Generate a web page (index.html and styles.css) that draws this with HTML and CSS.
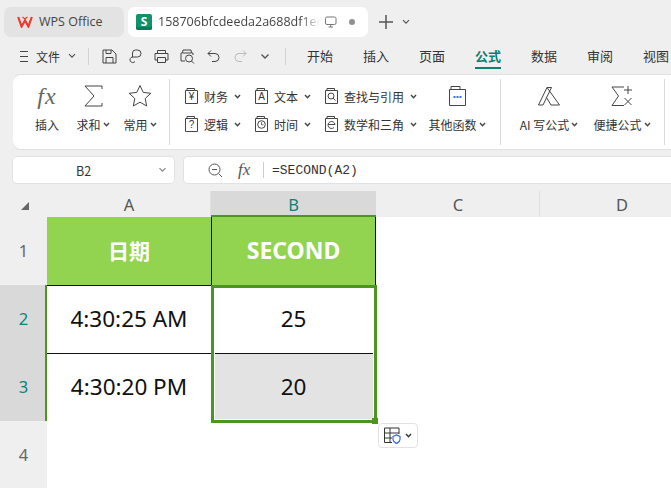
FILE: index.html
```html
<!DOCTYPE html>
<html lang="zh">
<head>
<meta charset="utf-8">
<title>WPS Office</title>
<link rel="stylesheet" href="styles.css">
</head>
<body>
<svg class="defs" xmlns="http://www.w3.org/2000/svg">
  <symbol id="chev" viewBox="0 0 8 6"><path d="M1 1.2 4 4.2 7 1.2" fill="none" stroke="currentColor" stroke-width="1.2"/></symbol>
  <symbol id="chevb" viewBox="0 0 8 6"><path d="M1 1.2 4 4.400 7 1.200" fill="none" stroke="currentColor" stroke-width="1.700"/></symbol>
  <symbol id="doc" viewBox="0 0 13 16"><path d="M.5 15.500V2.500H2V.5H9.500V2.500H12.500V15.500Z" fill="none" stroke="#444" stroke-width="1"/><path d="M2 2.500H9.500" stroke="#444" stroke-width="1"/></symbol>
</svg>

<div class="app">
  <header class="tabbar">
    <div class="tab tab-home">
      <svg class="wps-logo" viewBox="0 0 16 12"><path d="M1.200 1 4.600 10.500 8 4.500 11.400 10.500 14.800 1" fill="none" stroke="#ee3a2c" stroke-width="2.200"/><path d="M5.500 1 8 3 10.500 1" fill="none" stroke="#ee3a2c" stroke-width="1.300"/></svg>
      <span>WPS Office</span>
    </div>
    <div class="tab tab-doc">
      <span class="sheet-logo">S</span>
      <span class="tab-name">158706bfcdeeda2a688df1ec</span>
      <svg class="tab-monitor" viewBox="0 0 12 12"><rect x=".5" y="1" width="10.500" height="7.500" rx="1.500" fill="none" stroke="#777"/><path d="M3.500 11H8M5.700 8.500V11" stroke="#777"/></svg>
      <span class="tab-dot"></span>
    </div>
    <svg class="plus" viewBox="0 0 14 14"><path d="M7 0V14M0 7H14" stroke="#555" stroke-width="1.500"/></svg>
    <svg class="chev-tab"><use href="#chev"/></svg>
  </header>

  <nav class="menubar">
    <div class="quick">
      <svg class="q-menu" viewBox="0 0 8 11"><path d="M0 .5H8M0 5.500H8M0 10.500H8" stroke="#444"/></svg>
      <span class="file-label">文件</span>
      <svg class="chev-file"><use href="#chev"/></svg>
      <i class="vsep vsep-a"></i>
      <svg class="q-icon q-save" viewBox="0 0 15 15"><path d="M1 14V1H10L14 5V14ZM4 1V4.500H9V1M4 14V8.500H11V14" fill="none" stroke="#444"/></svg>
      <svg class="q-icon q-brush" viewBox="0 0 13 15"><path d="M3.500 8.500V4A3 3 0 0 1 6.500 1H8.500A3.500 3.500 0 0 1 8.500 8H3.500A2.800 2.800 0 1 0 6 12.500" fill="none" stroke="#444"/></svg>
      <svg class="q-icon q-print" viewBox="0 0 15 14"><path d="M3.500 4V1H11.500V4M3.500 10.500H1V4H14V10.500H11.500M3.500 8H11.500V13H3.500Z" fill="none" stroke="#444"/></svg>
      <svg class="q-icon q-preview" viewBox="0 0 15 15"><path d="M5 12H1V4H2.500L3 1H11L11.500 4H13V6M3 4H11" fill="none" stroke="#444"/><circle cx="9" cy="9.500" r="3.500" fill="none" stroke="#444"/><path d="M11.500 12 14 14.500" stroke="#444"/></svg>
      <svg class="q-icon q-undo" viewBox="0 0 13 14"><path d="M4 1 1 4 4 7M1 4H8A4 4 0 0 1 8 12H5" fill="none" stroke="#444"/></svg>
      <svg class="q-icon q-redo" viewBox="0 0 13 14"><path d="M9 1 12 4 9 7M12 4H5A4 4 0 0 0 5 12H8" fill="none" stroke="#bbb"/></svg>
      <svg class="chev-quick"><use href="#chev"/></svg>
      <i class="vsep vsep-b"></i>
    </div>
    <ul class="menu-tabs">
      <li>开始</li><li>插入</li><li>页面</li><li class="on">公式</li><li>数据</li><li>审阅</li><li>视图</li>
    </ul>
  </nav>

  <section class="ribbon">
    <div class="group group-main">
      <div class="big big-fx">
        <span class="fx-glyph">fx</span>
        <span class="big-label">插入</span>
      </div>
      <div class="big big-sum">
        <svg class="big-icon" viewBox="0 0 24 24"><path d="M21 5V2H4L13 12 4 22H21V19" fill="none" stroke="#444"/></svg>
        <span class="big-label">求和<svg class="chev-s"><use href="#chevb"/></svg></span>
      </div>
      <div class="big big-star">
        <svg class="big-icon" viewBox="0 0 24 24"><path d="M12 1.500 15.200 8.400 22.800 9.300 17.200 14.500 18.700 22 12 18.200 5.300 22 6.800 14.500 1.200 9.300 8.800 8.400Z" fill="none" stroke="#444"/></svg>
        <span class="big-label">常用<svg class="chev-s"><use href="#chevb"/></svg></span>
      </div>
    </div>

    <div class="group group-funcs">
      <div class="func-grid">
        <div class="fn fn-1"><span class="doc-icon"><svg><use href="#doc"/></svg><b>¥</b></span>财务<svg class="chev-s"><use href="#chevb"/></svg></div>
        <div class="fn fn-2"><span class="doc-icon"><svg><use href="#doc"/></svg><b>A</b></span>文本<svg class="chev-s"><use href="#chevb"/></svg></div>
        <div class="fn fn-3"><span class="doc-icon"><svg><use href="#doc"/></svg><svg class="doc-mark" viewBox="0 0 9 9"><circle cx="4" cy="4" r="3" fill="none" stroke="#444"/><path d="M6 6 8.500 8.500" stroke="#444"/></svg></span>查找与引用<svg class="chev-s"><use href="#chevb"/></svg></div>
        <div class="fn fn-1"><span class="doc-icon"><svg><use href="#doc"/></svg><b>?</b></span>逻辑<svg class="chev-s"><use href="#chevb"/></svg></div>
        <div class="fn fn-2"><span class="doc-icon"><svg><use href="#doc"/></svg><svg class="doc-mark" viewBox="0 0 9 9"><circle cx="4.500" cy="4.500" r="3.800" fill="none" stroke="#444"/><path d="M4.500 2.200V4.800H6.500" fill="none" stroke="#444" stroke-width=".8"/></svg></span>时间<svg class="chev-s"><use href="#chevb"/></svg></div>
        <div class="fn fn-3"><span class="doc-icon"><svg><use href="#doc"/></svg><svg class="doc-mark" viewBox="0 0 9 9"><path d="M1 4.500H8A3.500 3.500 0 1 0 7 7.500" fill="none" stroke="#444"/></svg></span>数学和三角<svg class="chev-s"><use href="#chevb"/></svg></div>
      </div>
      <div class="big big-more">
        <svg class="more-icon" viewBox="0 0 17 20"><path d="M.5 19.500V3.500H2V.5H11V3.500H16.500V19.500ZM2 3.500H11" fill="none" stroke="#444"/><path d="M4.500 11H6.500M7.500 11H9.500M10.500 11H12.500" stroke="#3f6fe8" stroke-width="2"/></svg>
        <span class="big-label">其他函数<svg class="chev-s"><use href="#chevb"/></svg></span>
      </div>
    </div>

    <div class="group group-ai">
      <div class="big big-ai">
        <svg class="big-icon" viewBox="0 0 24 24"><path d="M1.500 21 10 3.500H14.500L6 21ZM10 3.500 22.500 21H14L9.500 13.500" fill="none" stroke="#444"/></svg>
        <span class="big-label">AI 写公式<svg class="chev-s"><use href="#chevb"/></svg></span>
      </div>
      <div class="big big-quick">
        <svg class="big-icon" viewBox="0 0 24 24"><path d="M14 3H2L8.500 12 2 21.500H14" fill="none" stroke="#444"/><path d="M18 2V10M14 6H22M14.500 14 21.500 21M21.500 14 14.500 21" stroke="#444"/></svg>
        <span class="big-label">便捷公式<svg class="chev-s"><use href="#chevb"/></svg></span>
      </div>
    </div>
  </section>

  <section class="formula-row">
    <div class="namebox">
      <span>B2</span>
      <svg class="chev-name"><use href="#chev"/></svg>
    </div>
    <div class="formula">
      <svg class="zoom-icon" viewBox="0 0 15 15"><circle cx="6.500" cy="6.500" r="5.500" fill="none" stroke="#555"/><path d="M4 6.500H9M10.500 10.500 14 14" stroke="#555"/></svg>
      <span class="fx-small">fx</span>
      <i class="formula-sep"></i>
      <span class="formula-text">=SECOND(A2)</span>
    </div>
  </section>

  <main class="sheet">
    <div class="corner"><i></i></div>
    <div class="col">A</div>
    <div class="col col-on">B</div>
    <div class="col col-c">C</div>
    <div class="col">D</div>

    <div class="row">1</div>
    <div class="cell head">日期</div>
    <div class="cell head head-latin col-b">SECOND</div>
    <div class="blank"></div>

    <div class="row row-on">2</div>
    <div class="cell data">4:30:25 AM</div>
    <div class="cell data col-b">25</div>
    <div class="blank"></div>

    <div class="row row-on">3</div>
    <div class="cell data data-last">4:30:20 PM</div>
    <div class="cell data data-last data-grey col-b">20</div>
    <div class="blank"></div>

    <div class="row">4</div>
    <div class="blank blank-last"></div>

    <div class="selection"><i class="handle"></i></div>
    <div class="smart">
      <svg class="smart-icon" viewBox="0 0 17 17"><path d="M.5 1H15V7M.5 1V15.500H8M.5 6H15M.5 11H8M6 1V15.500" fill="none" stroke="#333"/><path d="M9 9.500 12.500 8 16 9.500V12.500C16 14.500 14 15.500 12.500 16.500 11 15.500 9 14.500 9 12.500Z" fill="#fff" stroke="#2f6be8" stroke-width="1.200"/></svg>
      <svg class="chev-smart"><use href="#chevb"/></svg>
    </div>
  </main>
</div>
</body>
</html>
```
FILE: styles.css
```css
* { box-sizing: border-box; }
html, body { margin: 0; padding: 0; }
body {
  width: 671px;
  height: 488px;
  overflow: hidden;
  background: #efefef;
  color: #333;
  font-family: "Noto Sans CJK SC", "Noto Sans", sans-serif;
  font-size: 12px;
}
.defs { display: none; }
.app { width: 671px; height: 488px; overflow: hidden; }
svg { display: block; flex: none; color: #555; }
i { display: block; font-style: normal; }

/* tab bar */
.tabbar { display: flex; align-items: center; height: 37px; padding: 6px 0 0 4px; }
.tab { display: flex; align-items: center; height: 30px; border-radius: 7px; }
.tab-home { width: 120px; background: #e3e3e3; padding-left: 13px; font: 12.500px "Open Sans", sans-serif; color: #444; }
.wps-logo { width: 16px; height: 12px; margin-right: 6px; }
.tab-doc { width: 240px; margin-left: 4px; background: #fff; padding-left: 8px; }
.sheet-logo {
  width: 16px; height: 16px; margin-right: 6px; border-radius: 2px;
  background: #12926b; color: #fff;
  font: bold 12px/15px "Open Sans", sans-serif; text-align: center;
  box-shadow: inset 0 -3px 0 #0b7a59;
}
.tab-name {
  width: 162px; overflow: hidden; white-space: nowrap;
  font: 12.500px "Open Sans", sans-serif; color: #444;
  -webkit-mask-image: linear-gradient(90deg, #000 88%, transparent);
  mask-image: linear-gradient(90deg, #000 88%, transparent);
}
.tab-monitor { width: 12px; height: 12px; margin-left: 5px; }
.tab-dot { width: 6px; height: 6px; margin-left: 12px; border-radius: 50%; background: #8f8f8f; }
.plus { width: 14px; height: 14px; margin-left: 11px; }
.chev-tab { width: 8px; height: 6px; margin-left: 9px; }

/* menu bar */
.menubar { display: flex; align-items: flex-start; height: 38px; }
.quick { display: flex; align-items: center; height: 38px; padding-left: 20px; }
.q-menu { width: 8px; height: 11px; }
.file-label { margin-left: 8px; width: 25px; font-size: 12px; color: #333; }
.chev-file { width: 8px; height: 6px; margin-left: 7px; }
.vsep { width: 1px; height: 17px; background: #d3d3d3; }
.vsep-a { margin-left: 12px; }
.q-icon { height: 15px; }
.q-save { width: 15px; margin-left: 13px; }
.q-brush { width: 13px; margin-left: 12px; }
.q-print { width: 15px; margin-left: 12px; }
.q-preview { width: 15px; margin-left: 11px; }
.q-undo { width: 13px; margin-left: 12px; }
.q-redo { width: 13px; margin-left: 14px; }
.chev-quick { width: 10px; height: 7px; margin-left: 13px; }
.vsep-b { margin-left: 15px; }
.menu-tabs { display: flex; gap: 30px; margin: 0 0 0 21px; padding: 0; list-style: none; font-size: 13px; color: #333; }
.menu-tabs li { height: 32px; padding-top: 10px; line-height: 18px; white-space: nowrap; }
.menu-tabs .on { color: #0c7f71; font-weight: 700; border-bottom: 2px solid #0c7f71; }

/* ribbon */
.ribbon {
  display: flex; align-items: center;
  height: 74px; margin-left: 13px; padding: 4px 0;
  background: #fff;
  border-radius: 8px 0 0 8px;
  box-shadow: 0 -1px 0 #e0e0e0, 0 1px 0 #e0e0e0;
}
.group { display: flex; height: 66px; border-right: 1px solid #d9d9d9; }
.group-main { width: 157px; padding-left: 12px; }
.group-funcs { width: 331px; padding-left: 15px; }
.group-ai { width: 164px; padding-left: 16px; }
.big { display: flex; flex-direction: column; align-items: center; padding-top: 5px; }
.big-icon { width: 24px; height: 24px; }
.big-label { display: flex; align-items: center; margin-top: 7px; height: 18px; font-size: 12px; color: #333; white-space: nowrap; }
.chev-s { width: 7px; height: 5px; margin-left: 2px; color: #444; }
.fx-glyph { height: 24px; font: italic 24px/24px "Liberation Serif", serif; color: #666; letter-spacing: 1px; }
.big-fx { width: 44px; }
.big-sum { width: 46px; margin-left: 1px; }
.big-star { width: 46px; margin-left: 1px; }
.func-grid { display: grid; grid-template-columns: 70px 70px 100px; grid-auto-rows: 28px; padding-top: 3px; }
.fn { display: flex; align-items: center; color: #333; white-space: nowrap; font-size: 12px; }
.doc-icon { position: relative; width: 13px; height: 16px; margin-right: 6px; }
.doc-icon svg { width: 13px; height: 16px; }
.doc-icon b { position: absolute; left: 0; right: 0; top: 2px; text-align: center; font: 10px/14px "Liberation Sans", sans-serif; color: #333; }
.doc-icon .doc-mark { position: absolute; left: 2px; top: 4px; width: 9px; height: 9px; }
.fn .chev-s { margin-left: 6px; }
.big-more { width: 66px; margin-left: -1px; padding-top: 7px; }
.more-icon { width: 17px; height: 20px; margin-bottom: 2px; }
.big-ai { width: 64px; }
.big-quick { width: 68px; margin-left: 7px; }

/* formula row */
.formula-row { display: flex; gap: 10px; height: 26px; margin: 8px 0 8px 13px; }
.namebox, .formula { display: flex; align-items: center; height: 26px; background: #fff; box-shadow: 0 0 0 1px #e2e2e2; border-radius: 4px; }
.namebox { position: relative; justify-content: center; width: 161px; padding-right: 20px; font-size: 12.500px; color: #333; }
.chev-name { position: absolute; right: 7px; top: 10px; width: 9px; height: 6px; color: #888; }
.formula { flex: 1; border-radius: 4px 0 0 4px; padding-left: 24px; }
.zoom-icon { width: 15px; height: 15px; }
.fx-small { width: 18px; margin-left: 15px; font: italic 17px/18px "Liberation Serif", serif; color: #555; }
.formula-sep { width: 1px; height: 16px; margin-left: 7px; background: #ccc; }
.formula-text { margin-left: 8px; font: 13px "Liberation Mono", "Noto Sans CJK SC", monospace; color: #333; }

/* sheet */
.sheet {
  position: relative;
  display: grid;
  width: 704px;
  grid-template-columns: 47px 164px 165px 164px 164px;
  grid-template-rows: 26px 68px 68px 68px 68px;
  background: #fff;
}
.corner { position: relative; background: #efefef; }
.corner i { position: absolute; left: 21px; top: 11px; width: 0; height: 0; border-style: solid; border-width: 0 0 8px 8px; border-color: transparent transparent #666 transparent; }
.col {
  display: flex; align-items: center; justify-content: center;
  background: #efefef; box-shadow: inset -1px 0 0 #e0e0e0;
  font: 16.500px "Noto Sans", sans-serif; color: #555;
}
.col-on { background: #d9d9d9; color: #0f8373; box-shadow: inset 0 -2px 0 #4a961f; }
.row {
  display: flex; align-items: center; justify-content: center;
  background: #efefef; font: 16.500px "Noto Sans", sans-serif; color: #666;
  padding-bottom: 1px;
}
.row-on { background: #d9d9d9; color: #0f8373; box-shadow: inset -2px 0 0 #4a961f; }
.cell { display: flex; align-items: center; justify-content: center; }
.col-b { border-left: 1px solid #111; border-right: 1px solid #111; }
.head { padding-bottom: 2px; background: #92d44f; color: #fff; font: bold 21px "Noto Sans CJK SC", sans-serif; }
.head-latin { font: bold 23px "Noto Sans", sans-serif; }
.data { padding-bottom: 3px; background: #fff; color: #111; font: 22.500px "Noto Sans", sans-serif; border-top: 1px solid #111; }
.data-last { margin-bottom: -1px; border-bottom: 1px solid #111; }
.data-grey { background: #e3e3e3; }
.blank { grid-column: 4 / 6; background: #fff; }
.blank-last { grid-column: 2 / 6; }

.selection { position: absolute; left: 211px; top: 94px; width: 166px; height: 138px; border: 3px solid #4a961f; box-shadow: inset 0 0 0 1px #fff; pointer-events: none; }
.handle { position: absolute; right: -4px; bottom: -4px; width: 6px; height: 6px; background: #4a961f; }
.smart {
  position: absolute; left: 378px; top: 232px; display: flex; align-items: center;
  width: 40px; height: 25px; padding-left: 5px;
  background: #fff; border: 1px solid #e2e2e2; border-radius: 4px;
}
.smart-icon { width: 17px; height: 17px; }
.chev-smart { width: 7px; height: 5px; margin-left: 4px; color: #333; }
```
